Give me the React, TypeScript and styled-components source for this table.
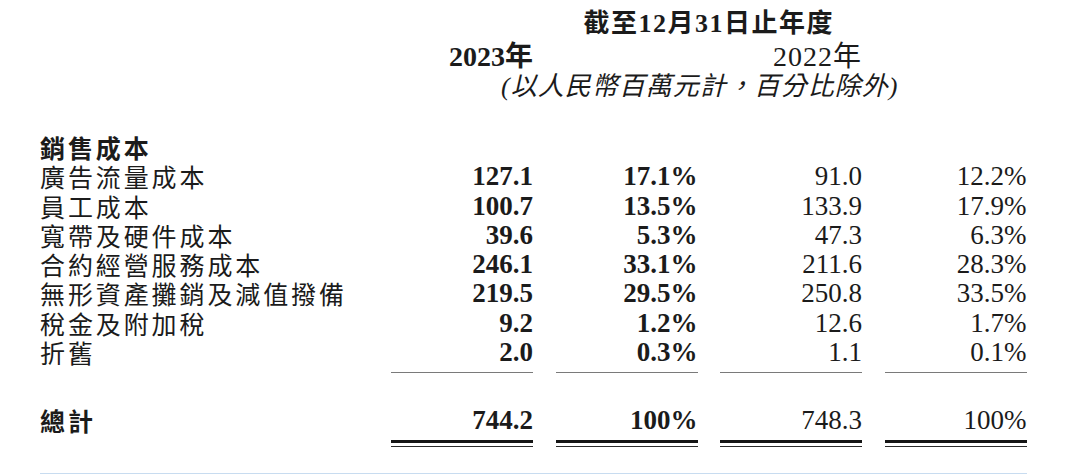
import React from "react";
import styled, { createGlobalStyle } from "styled-components";

const Global = createGlobalStyle`
  html, body { margin: 0; padding: 0; background: #ffffff; }
  body { width: 1080px; height: 474px; overflow: hidden; }
`;

const Page = styled.div`
  box-sizing: border-box;
  width: 1080px;
  height: 474px;
  padding: 9px 0 0 40px;
  color: #1b1b1b;
  display: flex;
  flex-direction: column;
`;

const Row = styled.div<{ $mt?: number }>`
  display: grid;
  grid-template-columns: 328.5px repeat(4, 142px);
  column-gap: 22.5px;
  margin-top: ${(p) => p.$mt ?? 0}px;
`;

const serif = `"Liberation Serif", "Noto Sans CJK TC", serif`;
const sans = `"Noto Sans CJK TC", "Noto Sans", sans-serif`;

const Title = styled.div`
  grid-column: 2 / 6;
  text-align: center;
  font-family: ${serif};
  font-weight: 700;
  font-size: 26px;
  line-height: 30px;
  letter-spacing: 1.5px;
`;

const Year = styled.div<{ $col: number; $bold?: boolean }>`
  grid-column: ${(p) => p.$col};
  text-align: right;
  font-family: ${serif};
  font-weight: ${(p) => (p.$bold ? 700 : 400)};
  font-size: 28px;
  line-height: 30px;
  letter-spacing: ${(p) => (p.$bold ? 0 : 1)}px;
`;

const Subtitle = styled.div`
  grid-column: 2 / 6;
  text-align: center;
  padding-right: 18px;
  font-family: ${serif};
  font-style: italic;
  font-size: 26px;
  line-height: 30px;
  letter-spacing: 1px;
`;

const Label = styled.div<{ $bold?: boolean }>`
  font-family: ${sans};
  font-weight: ${(p) => (p.$bold ? 700 : 400)};
  font-size: 25px;
  letter-spacing: 2.9px;
  line-height: 29.3px;
  white-space: nowrap;
`;

const Num = styled.div<{ $bold?: boolean; $rule?: boolean }>`
  text-align: right;
  font-family: ${serif};
  font-weight: ${(p) => (p.$bold ? 700 : 400)};
  font-size: 27px;
  line-height: 29.3px;
  padding-bottom: ${(p) => (p.$rule ? 5 : 0)}px;
  border-bottom: ${(p) => (p.$rule ? "1.5px solid #7a7a7a" : "none")};
`;

const DoubleRule = styled.div<{ $col: number }>`
  grid-column: ${(p) => p.$col};
  height: 3.5px;
  border-top: 3.5px solid #151515;
  border-bottom: 1.5px solid #2a2a2a;
`;

const BottomRule = styled.div`
  width: 987px;
  margin-top: 26px;
  height: 2px;
  background: #c8dcf0;
`;

type Item = { label: string; a: string; ap: string; b: string; bp: string };

const items: Item[] = [
  { label: "廣告流量成本", a: "127.1", ap: "17.1%", b: "91.0", bp: "12.2%" },
  { label: "員工成本", a: "100.7", ap: "13.5%", b: "133.9", bp: "17.9%" },
  { label: "寬帶及硬件成本", a: "39.6", ap: "5.3%", b: "47.3", bp: "6.3%" },
  { label: "合約經營服務成本", a: "246.1", ap: "33.1%", b: "211.6", bp: "28.3%" },
  { label: "無形資產攤銷及減值撥備", a: "219.5", ap: "29.5%", b: "250.8", bp: "33.5%" },
  { label: "稅金及附加稅", a: "9.2", ap: "1.2%", b: "12.6", bp: "1.7%" },
  { label: "折舊", a: "2.0", ap: "0.3%", b: "1.1", bp: "0.1%" },
];

export default function App() {
  return (
    <>
      <Global />
      <Page>
        <Row>
          <Title>截至12月31日止年度</Title>
        </Row>
        <Row $mt={3}>
          <Year $col={2} $bold>2023年</Year>
          <Year $col={4}>2022年</Year>
        </Row>
        <Row $mt={0}>
          <Subtitle>(以人民幣百萬元計，百分比除外)</Subtitle>
        </Row>
        <Row $mt={31}>
          <Label $bold>銷售成本</Label>
        </Row>
        {items.map((it, i) => {
          const last = i === items.length - 1;
          return (
            <Row key={it.label}>
              <Label>{it.label}</Label>
              <Num $bold $rule={last}>{it.a}</Num>
              <Num $bold $rule={last}>{it.ap}</Num>
              <Num $rule={last}>{it.b}</Num>
              <Num $rule={last}>{it.bp}</Num>
            </Row>
          );
        })}
        <Row $mt={33}>
          <Label $bold>總計</Label>
          <Num $bold>744.2</Num>
          <Num $bold>100%</Num>
          <Num>748.3</Num>
          <Num>100%</Num>
        </Row>
        <Row $mt={4}>
          <DoubleRule $col={2} />
          <DoubleRule $col={3} />
          <DoubleRule $col={4} />
          <DoubleRule $col={5} />
        </Row>
        <BottomRule />
      </Page>
    </>
  );
}
